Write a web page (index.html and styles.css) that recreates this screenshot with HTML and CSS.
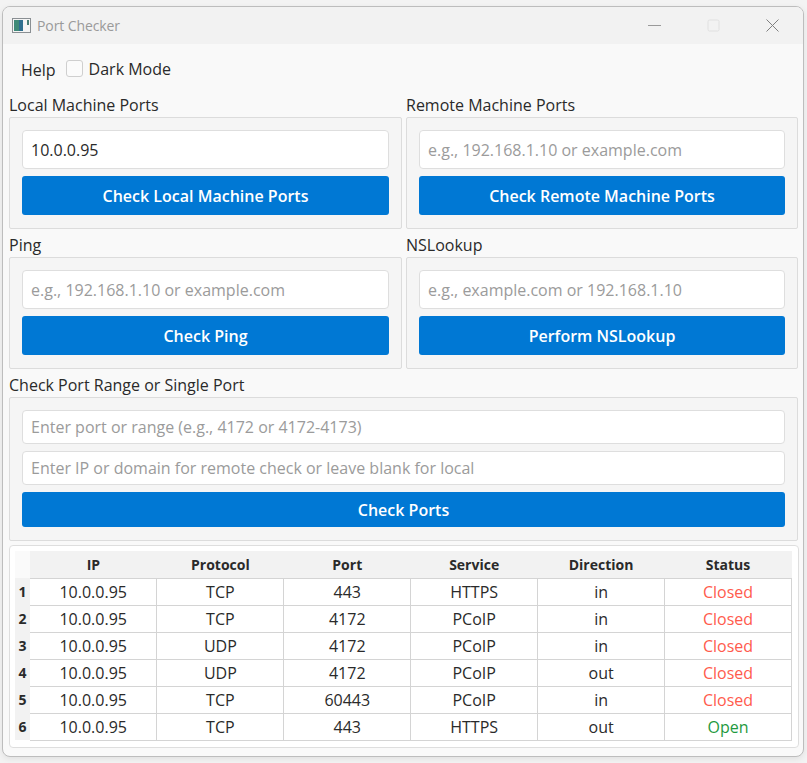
FILE: index.html
```html
<!DOCTYPE html>
<html lang="en">
<head>
<meta charset="utf-8">
<title>Port Checker</title>
<link rel="stylesheet" href="styles.css">
</head>
<body>
<div class="window">
  <header class="titlebar">
    <svg class="app-icon" width="19" height="15" viewBox="0 0 19 15"><rect x="0.5" y="0.5" width="18" height="14" fill="#f4f4f4" stroke="#8a8f93"/><rect x="2" y="2" width="9" height="11" fill="#3f8a78"/><rect x="7" y="2" width="4" height="11" fill="#2f6f8f"/><rect x="15" y="2" width="2" height="5" fill="#4a7f78"/></svg>
    <span class="title">Port Checker</span>
    <div class="controls">
      <svg width="13" height="13" viewBox="0 0 13 13"><path d="M0 6.5H13" stroke="#9a9a9a" stroke-width="1"/></svg>
      <svg width="13" height="13" viewBox="0 0 13 13"><rect x="1" y="1" width="11" height="11" rx="1.5" fill="none" stroke="#e0e0e0"/></svg>
      <svg width="13" height="13" viewBox="0 0 13 13"><path d="M0.5 0.5L12.5 12.5M12.5 0.5L0.5 12.5" stroke="#808080" stroke-width="1"/></svg>
    </div>
  </header>
  <main class="content">
    <div class="menu">
      <span class="help">Help</span>
      <label class="check"><span class="box"></span>Dark Mode</label>
    </div>
    <div class="grid">
      <section class="group">
        <h2>Local Machine Ports</h2>
        <div class="panel">
          <div class="input value">10.0.0.95</div>
          <button class="btn">Check Local Machine Ports</button>
        </div>
      </section>
      <section class="group">
        <h2>Remote Machine Ports</h2>
        <div class="panel">
          <div class="input">e.g., 192.168.1.10 or example.com</div>
          <button class="btn">Check Remote Machine Ports</button>
        </div>
      </section>
      <section class="group">
        <h2>Ping</h2>
        <div class="panel">
          <div class="input">e.g., 192.168.1.10 or example.com</div>
          <button class="btn">Check Ping</button>
        </div>
      </section>
      <section class="group">
        <h2>NSLookup</h2>
        <div class="panel">
          <div class="input">e.g., example.com or 192.168.1.10</div>
          <button class="btn">Perform NSLookup</button>
        </div>
      </section>
    </div>
    <section class="group range">
      <h2>Check Port Range or Single Port</h2>
      <div class="panel">
        <div class="input small">Enter port or range (e.g., 4172 or 4172-4173)</div>
        <div class="input small">Enter IP or domain for remote check or leave blank for local</div>
        <button class="btn short">Check Ports</button>
      </div>
    </section>
    <div class="table-card">
      <table>
        <thead>
          <tr><th class="corner"></th><th>IP</th><th>Protocol</th><th>Port</th><th>Service</th><th>Direction</th><th>Status</th></tr>
        </thead>
        <tbody>
          <tr><th>1</th><td>10.0.0.95</td><td>TCP</td><td>443</td><td>HTTPS</td><td>in</td><td class="closed">Closed</td></tr>
          <tr><th>2</th><td>10.0.0.95</td><td>TCP</td><td>4172</td><td>PCoIP</td><td>in</td><td class="closed">Closed</td></tr>
          <tr><th>3</th><td>10.0.0.95</td><td>UDP</td><td>4172</td><td>PCoIP</td><td>in</td><td class="closed">Closed</td></tr>
          <tr><th>4</th><td>10.0.0.95</td><td>UDP</td><td>4172</td><td>PCoIP</td><td>out</td><td class="closed">Closed</td></tr>
          <tr><th>5</th><td>10.0.0.95</td><td>TCP</td><td>60443</td><td>PCoIP</td><td>in</td><td class="closed">Closed</td></tr>
          <tr><th>6</th><td>10.0.0.95</td><td>TCP</td><td>443</td><td>HTTPS</td><td>out</td><td class="open">Open</td></tr>
        </tbody>
      </table>
    </div>
  </main>
</div>
</body>
</html>
```
FILE: styles.css
```css
* { box-sizing: border-box; }
html, body { margin: 0; padding: 0; }
body {
  width: 807px;
  height: 763px;
  overflow: hidden;
  background: #f3f3f3;
  padding: 6px 3px 0 2px;
  font-family: "Open Sans", "Noto Sans", sans-serif;
  color: #2a2a2a;
}
.window {
  height: 751px;
  border: 1px solid #bdbdbd;
  border-radius: 8px;
  background: #f9f9f9;
  overflow: hidden;
  box-shadow: 0 2px 6px rgba(0,0,0,.08);
}
.titlebar {
  height: 37px;
  background: #f2f2f2;
  display: flex;
  align-items: center;
  padding-left: 9px;
}
.app-icon { flex: none; }
.title { margin-left: 6px; font-size: 14px; color: #9a9a9a; letter-spacing: -0.1px; }
.controls { margin-left: auto; display: flex; gap: 46px; padding-right: 24px; }
.content { padding: 0 5px 0 6px; }
.menu { height: 49px; display: flex; align-items: center; padding: 0 0 0 12px; font-size: 16px; }
.help { margin-top: 2px; }
.check { display: flex; align-items: center; margin-left: 10px; }
.box { width: 17px; height: 17px; border: 1px solid #cfcfcf; border-radius: 3px; background: #fbfbfb; margin-right: 6px; }
.grid { display: grid; grid-template-columns: 393px 392px; column-gap: 4px; row-gap: 4px; }
.group h2 { margin: 0; height: 24px; font-size: 16px; font-weight: 400; line-height: 24px; }
.panel { border: 1px solid #dcdcdc; border-radius: 2px; background: #f5f5f5; padding: 12px 12px 13px; display: flex; flex-direction: column; gap: 7px; }
.input { height: 39px; border: 1px solid #dedede; border-radius: 4px; background: #fff; padding: 0 8px; display: flex; align-items: center; font-size: 16px; color: #9b9b9b; white-space: nowrap; }
.input.value { color: #2a2a2a; }
.input.small { height: 34px; }
.btn { height: 39px; border: 0; border-radius: 3px; background: #0078d4; color: #fff; font: 600 16px "Open Sans", "Noto Sans", sans-serif; padding: 0; }
.btn.short { height: 35px; }
.range { margin-top: 4px; }
.table-card { margin-top: 4px; width: 790px; height: 203px; border: 1px solid #dedede; border-radius: 4px; background: #fff; padding: 5px 5px 0 5px; }
table { border-collapse: collapse; table-layout: fixed; width: 777px; font-size: 16px; }
th, td { padding: 0; text-align: center; height: 27px; }
thead th { background: #f2f2f2; font-size: 14px; font-weight: 700; }
tbody th { width: 15px; background: #f2f2f2; font-size: 14px; font-weight: 700; }
thead th.corner { width: 15px; background: #fafafa; }
td { border: 1px solid #d4d4d4; border-left: 0; }
td:last-child { border-right: 1px solid #d4d4d4; }
.closed { color: #ff5b4d; }
.open { color: #1f9a3f; }
```
